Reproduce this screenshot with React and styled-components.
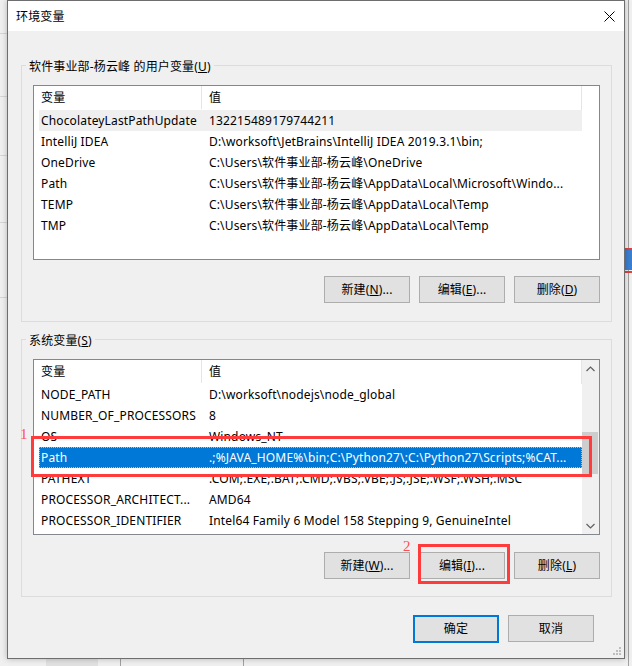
import React from 'react';
import styled, { createGlobalStyle } from 'styled-components';

const Global = createGlobalStyle`
  html, body { margin: 0; padding: 0; }
  body {
    background: #f0f0f0;
    font-family: "Noto Sans", "Noto Sans CJK SC", sans-serif;
    font-size: 12px;
    letter-spacing: 0.15px;
    color: #000;
  }
  * { box-sizing: border-box; }
`;

const Screen = styled.div`
  position: relative;
  width: 632px;
  height: 666px;
  overflow: hidden;
  background: #f0f0f0;
  padding-left: 7px;
`;

const BackLine = styled.div`
  position: absolute;
  left: ${p => p.$x}px;
  top: ${p => p.$y}px;
  width: ${p => p.$w}px;
  height: ${p => p.$h}px;
  background: ${p => p.$c || '#d6d6d6'};
`;

const Dialog = styled.div`
  position: relative;
  width: 618px;
  height: 659px;
  border: 1px solid #6e6e6e;
  background: #f0f0f0;
  display: flex;
  flex-direction: column;
  box-shadow: 0 0 6px rgba(0, 0, 0, 0.25);
`;

const TitleBar = styled.div`
  height: 30px;
  flex: none;
  background: #fff;
  display: flex;
  align-items: center;
  justify-content: space-between;
  padding: 0 9px 0 8px;
  font-size: 12px;
`;

const Body = styled.div`
  display: flex;
  flex-direction: column;
  padding: 34px 12px 0 13px;
`;

const Group = styled.div`
  display: flex;
  flex-direction: column;
  border: 1px solid #dcdcdc;
  padding: 0 11px ${p => p.$pb}px 11px;
  margin-top: ${p => p.$mt || 0}px;
`;

const Legend = styled.div`
  align-self: flex-start;
  margin: -7px 0 0 -7px;
  padding: 0 3px;
  background: #f0f0f0;
  line-height: 16px;
  white-space: nowrap;
`;

const ListBox = styled.div`
  margin-top: 10px;
  height: ${p => p.$h}px;
  border: 1px solid #828790;
  background: #fff;
  display: flex;
  overflow: hidden;
`;

const Table = styled.div`
  flex: none;
  width: 543px;
  margin-left: 5px;
  display: flex;
  flex-direction: column;
`;

const HeaderRow = styled.div`
  display: grid;
  grid-template-columns: 163px 1fr;
  height: 24px;
  border-right: 1px solid #e5e5e5;
`;

const HeaderCell = styled.div`
  padding-left: ${p => (p.$first ? 2 : 7)}px;
  line-height: 23px;
  height: 23px;
  border-right: ${p => (p.$first ? '1px solid #e5e5e5' : 'none')};
`;

const Row = styled.div`
  display: grid;
  grid-template-columns: 163px 1fr;
  height: 21px;
  line-height: 21px;
  background: ${p => (p.$sel ? '#0078d7' : p.$hover ? '#efefef' : 'transparent')};
  color: ${p => (p.$sel ? '#fff' : '#000')};
  outline: ${p => (p.$sel ? '1px dotted #f6b35a' : 'none')};
  outline-offset: -1px;
`;

const Cell = styled.div`
  padding-left: ${p => (p.$first ? 2 : 7)}px;
  white-space: nowrap;
  overflow: hidden;
`;

const Spacer = styled.div`
  flex: 1;
`;

const ScrollBar = styled.div`
  flex: none;
  width: 17px;
  display: flex;
  flex-direction: column;
  background: #f0f0f0;
`;

const ArrowBtn = styled.div`
  height: 17px;
  display: flex;
  align-items: center;
  justify-content: center;
`;

const Track = styled.div`
  flex: 1;
  padding-top: ${p => p.$offset}px;
`;

const Thumb = styled.div`
  width: 16px;
  height: ${p => p.$h}px;
  background: #cdcdcd;
`;

const ButtonRow = styled.div`
  display: flex;
  justify-content: flex-end;
  gap: 9px;
  margin-top: ${p => p.$mt}px;
`;

const Button = styled.button`
  width: 86px;
  height: ${p => (p.$default ? 28 : 27)}px;
  padding: 0;
  margin: 0;
  border: ${p => (p.$default ? '2px solid #0078d7' : '1px solid #adadad')};
  background: #e1e1e1;
  font-family: inherit;
  font-size: 12px;
  letter-spacing: inherit;
  color: #000;
  line-height: 1;
`;

const Footer = styled.div`
  display: flex;
  justify-content: flex-end;
  gap: 9px;
  padding: 18px 30px 0 0;
`;

const Grip = styled.svg`
  position: absolute;
  right: 2px;
  bottom: 2px;
`;

const RedBox = styled.div`
  position: absolute;
  left: ${p => p.$x}px;
  top: ${p => p.$y}px;
  width: ${p => p.$w}px;
  height: ${p => p.$h}px;
  border: 3px solid #ff3b3b;
  pointer-events: none;
`;

const Mark = styled.div`
  position: absolute;
  left: ${p => p.$x}px;
  top: ${p => p.$y}px;
  font-family: "Liberation Serif", "DejaVu Serif", serif;
  font-size: 15px;
  line-height: 15px;
  color: #ff5050;
`;

const userVars = [
  ['ChocolateyLastPathUpdate', '132215489179744211'],
  ['IntelliJ IDEA', 'D:\\worksoft\\JetBrains\\IntelliJ IDEA 2019.3.1\\bin;'],
  ['OneDrive', 'C:\\Users\\软件事业部-杨云峰\\OneDrive'],
  ['Path', 'C:\\Users\\软件事业部-杨云峰\\AppData\\Local\\Microsoft\\Windo...'],
  ['TEMP', 'C:\\Users\\软件事业部-杨云峰\\AppData\\Local\\Temp'],
  ['TMP', 'C:\\Users\\软件事业部-杨云峰\\AppData\\Local\\Temp'],
];

const sysVars = [
  ['NODE_PATH', 'D:\\worksoft\\nodejs\\node_global'],
  ['NUMBER_OF_PROCESSORS', '8'],
  ['OS', 'Windows_NT'],
  ['Path', '.;%JAVA_HOME%\\bin;C:\\Python27\\;C:\\Python27\\Scripts;%CAT...'],
  ['PATHEXT', '.COM;.EXE;.BAT;.CMD;.VBS;.VBE;.JS;.JSE;.WSF;.WSH;.MSC'],
  ['PROCESSOR_ARCHITECT...', 'AMD64'],
  ['PROCESSOR_IDENTIFIER', 'Intel64 Family 6 Model 158 Stepping 9, GenuineIntel'],
];

const Chevron = ({ up }) => (
  <svg width="9" height="6" viewBox="0 0 9 6">
    <polyline
      points={up ? '0.5,5 4.5,1 8.5,5' : '0.5,1 4.5,5 8.5,1'}
      fill="none"
      stroke="#606060"
      strokeWidth="1.2"
    />
  </svg>
);

function VarList({ rows, height, hoverIndex, selIndex, scroll }) {
  return (
    <ListBox $h={height}>
      <Table>
        <HeaderRow>
          <HeaderCell $first>变量</HeaderCell>
          <HeaderCell>值</HeaderCell>
        </HeaderRow>
        {rows.map(([k, v], i) => (
          <Row key={k + i} $hover={i === hoverIndex} $sel={i === selIndex}>
            <Cell $first>{k}</Cell>
            <Cell>{v}</Cell>
          </Row>
        ))}
      </Table>
      <Spacer />
      {scroll && (
        <ScrollBar>
          <ArrowBtn><Chevron up /></ArrowBtn>
          <Track $offset={55}>
            <Thumb $h={42} />
          </Track>
          <ArrowBtn><Chevron /></ArrowBtn>
        </ScrollBar>
      )}
    </ListBox>
  );
}

export default function App() {
  return (
    <>
      <Global />
      <Screen>
        <BackLine $x={0} $y={33} $w={7} $h={1} />
        <BackLine $x={0} $y={96} $w={7} $h={1} />
        <BackLine $x={0} $y={155} $w={7} $h={1} />
        <BackLine $x={0} $y={222} $w={7} $h={1} />
        <BackLine $x={0} $y={297} $w={7} $h={1} />
        <BackLine $x={628} $y={0} $w={1} $h={666} $c="#a0a0a0" />
        <BackLine $x={625} $y={250} $w={7} $h={20} $c="#3a7fd0" />
        <BackLine $x={625} $y={248} $w={7} $h={2} $c="#e04040" />
        <BackLine $x={625} $y={271} $w={7} $h={2} $c="#e04040" />
        <BackLine $x={46} $y={659} $w={52} $h={7} $c="#e1e1e1" />
        <BackLine $x={120} $y={659} $w={1} $h={7} $c="#a0a0a0" />
        <BackLine $x={243} $y={659} $w={1} $h={7} $c="#a0a0a0" />
        <Dialog>
          <TitleBar>
            <span>环境变量</span>
            <svg width="11" height="11" viewBox="0 0 11 11">
              <path d="M0.5 0.5 L10.5 10.5 M10.5 0.5 L0.5 10.5" stroke="#000" strokeWidth="1" />
            </svg>
          </TitleBar>
          <Body>
            <Group $pb={18}>
              <Legend>软件事业部-杨云峰 的用户变量(<u>U</u>)</Legend>
              <VarList rows={userVars} height={175} hoverIndex={0} />
              <ButtonRow $mt={16}>
                <Button>新建(<u>N</u>)...</Button>
                <Button>编辑(<u>E</u>)...</Button>
                <Button>删除(<u>D</u>)</Button>
              </ButtonRow>
            </Group>
            <Group $pb={17} $mt={17}>
              <Legend>系统变量(<u>S</u>)</Legend>
              <VarList rows={sysVars} height={176} selIndex={3} scroll />
              <ButtonRow $mt={17}>
                <Button>新建(<u>W</u>)...</Button>
                <Button>编辑(<u>I</u>)...</Button>
                <Button>删除(<u>L</u>)</Button>
              </ButtonRow>
            </Group>
          </Body>
          <Footer>
            <Button $default>确定</Button>
            <Button>取消</Button>
          </Footer>
          <Grip width="9" height="9" viewBox="0 0 9 9">
            {[[7, 1], [4, 4], [7, 4], [1, 7], [4, 7], [7, 7]].map(([x, y]) => (
              <rect key={`${x}-${y}`} x={x - 1} y={y - 1} width="2" height="2" fill="#bdbdbd" />
            ))}
          </Grip>
        </Dialog>
        <RedBox $x={31} $y={436} $w={561} $h={41} />
        <Mark $x={20} $y={427}>1</Mark>
        <RedBox $x={418} $y={544} $w={92} $h={40} />
        <Mark $x={403} $y={539}>2</Mark>
      </Screen>
    </>
  );
}
